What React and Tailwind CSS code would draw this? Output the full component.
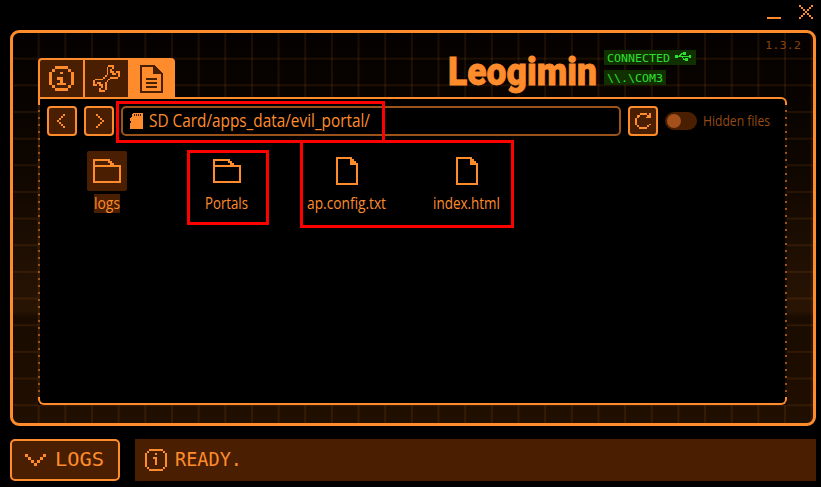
const O = "#ff8c2c";

/* Draws a bitmap glyph; every # in the rows is one cell. */
function Pixels({ rows, className }) {
  const w = Math.max(...rows.map((r) => r.length));
  const h = rows.length;
  return (
    <svg viewBox={`0 0 ${w} ${h}`} preserveAspectRatio="none" shapeRendering="crispEdges" fill="currentColor" className={`block shrink-0 ${className}`}>
      {rows.flatMap((r, y) => [...r].map((c, x) => (c === "#" ? <rect key={`${x}-${y}`} x={x} y={y} width={1} height={1} /> : null)))}
    </svg>
  );
}

const INFO = ["..#####..", ".#.....#.", "#...#...#", "#.......#", "#..##...#", "#...#...#", "#..###..#", ".#.....#.", "..#####.."];
const INFO_THIN = ["..#######..", ".#.......#.", "#....#....#", "#.........#", "#...##....#", "#....#....#", "#....#....#", "#....#....#", "#.........#", ".#.......#.", "..#######.."];
const WRENCH = [
  "........###...",
  ".......#..#...",
  ".......#.#....",
  ".......#.##.##",
  ".......#..##.#",
  "......#......#",
  ".....#...####.",
  ".####...#.....",
  "#......#......",
  "#.##..#.......",
  "##.##.#.......",
  "....#.#.......",
  "...#..#.......",
  "...###........",
];
const LEFT = ["...#", "..#.", ".#..", "#...", ".#..", "..#.", "...#"];
const CHEVRON = ["#.....#", ".#...#.", "..#.#..", "...#..."];
const CROSS = ["#.....#", ".#...#.", "..#.#..", "...#...", "..#.#..", ".#...#.", "#.....#"];
const REFRESH = [
  "...####.#",
  ".##....##",
  ".#....###",
  "#........",
  "#........",
  "#........",
  "#.......#",
  ".#.....#.",
  "..#####..",
];

/* Text in a condensed shape, fitted to its drawn width. */
function Label({ children, className = "", w, size, font = "Open Sans", weight = 400, stroke = 0 }) {
  return (
    <svg width={w} height={size * 1.4} className={`block shrink-0 overflow-visible ${className}`} fill="currentColor">
      <text x="0" y={size * 1.05} textLength={w} lengthAdjust="spacingAndGlyphs" fontSize={size} fontFamily={`'${font}', sans-serif`} fontWeight={weight} stroke="currentColor" strokeWidth={stroke}>{children}</text>
    </svg>
  );
}

function Folder() {
  return (
    <svg width="28" height="24" viewBox="0 0 28 24" fill="none" stroke="currentColor" strokeWidth="2" shapeRendering="crispEdges">
      <path d="M1 1H16V3H18V5H20V7H27V23H1Z M1 7H20" />
    </svg>
  );
}

function Page() {
  return (
    <svg width="22" height="28" viewBox="0 0 22 28" fill="none" stroke="currentColor" strokeWidth="2" shapeRendering="crispEdges">
      <path d="M1 1H15V3H17V5H19V7H21V27H1Z" />
      <path d="M14 2H16V4H18V6H20V8H14Z" fill="currentColor" stroke="none" />
    </svg>
  );
}

function FileItem({ name, w, folder, selected }) {
  return (
    <div className="flex w-[120px] flex-col items-center">
      <div className={`flex h-10 w-10 items-center justify-center rounded-[2px] ${selected ? "bg-[#4a1e00]" : ""}`}>
        {folder ? <Folder /> : <Page />}
      </div>
      <div className={`mt-[3px] flex h-[19px] items-center ${selected ? "bg-[#4a1e00]" : "pr-[2px]"}`}>
        <Label w={w} size={15.5}>{name}</Label>
      </div>
    </div>
  );
}

const btn = "flex h-[30px] w-[30px] shrink-0 items-center justify-center rounded-[4px] border-2 border-[#ff8c2c] bg-[#4a1e00]";

export default function App() {
  return (
    <div className="relative flex h-[487px] w-[821px] flex-col overflow-hidden bg-black text-[#ff8c2c]">
      <div className="flex h-[30px] shrink-0 justify-end pr-2">
        <div className="mt-[17px] h-[2px] w-[14px] bg-[#ff8c2c]" />
        <Pixels rows={CROSS} className="ml-[18px] mt-[5px] h-[14px] w-[14px]" />
      </div>

      <div className="ml-[10px] h-[396px] w-[806px] shrink-0 rounded-[9px] border-[3px] border-[#ff8c2c] bg-[linear-gradient(to_right,transparent_25px,#ff8c2c18_25px),linear-gradient(to_bottom,transparent_25px,#ff8c2c18_25px),linear-gradient(to_bottom,transparent_130px,#ff8c2c12_278px,transparent_284px),linear-gradient(to_bottom,#040100,#210f00)] bg-[size:26.67px_26.67px,26.67px_26.67px,100%_100%,100%_100%]">
        <div className="flex h-[64px] pl-[25px]">
          <div className="mt-[25px] flex h-[39px] w-[137px] shrink-0 overflow-hidden rounded-t-[4px] border-2 border-b-0 border-[#ff8c2c] bg-[#ff8c2c]">
            <div className="flex w-[43px] items-center justify-center bg-[#4a1e00]"><Pixels rows={INFO} className="h-[25px] w-[25px]" /></div>
            <div className="ml-[2px] flex w-[43px] items-center justify-center bg-[#4a1e00]"><Pixels rows={WRENCH} className="h-[27px] w-[27px]" /></div>
            <div className="flex flex-1 items-center justify-center pl-[2px] text-[#4a1e00]">
              <svg width="23" height="28" viewBox="0 0 23 28" fill="none" stroke="currentColor" strokeWidth="2" shapeRendering="crispEdges">
                <path d="M1 1H14L22 9V27H1Z M6 14H17 M6 18H17 M6 22H17" />
                <path d="M13 1H15V3H17V5H19V7H21V9H13Z" fill="currentColor" stroke="none" />
              </svg>
            </div>
          </div>
          <div className="ml-[273px] mt-[12px]"><Label w={149} size={38} font="Roboto" weight={900} stroke={0.8}>Leogimin</Label></div>
          <div className="ml-[7px] mt-[17px] flex w-[120px] flex-col items-start gap-[5px] text-[#2ee02e]">
            <div className="flex h-[15px] w-[92px] items-center bg-[#103000] pl-[3px]">
              <Label w={63} size={11} font="DejaVu Sans Mono">CONNECTED</Label>
              <svg width="17" height="9" viewBox="0 0 17 9" className="-mt-[3px] ml-[5px]" fill="none" stroke="currentColor" shapeRendering="crispEdges">
                <path d="M1 4.5H16 M4 4.5L7 1.5H10 M7 4.5L9 7.5H11" />
                <path d="M0 3h3v3H0z M8 0h3v3h-3z M10 6h3v3h-3z M14 3h2v3h-2z" fill="currentColor" stroke="none" />
              </svg>
            </div>
            <div className="flex h-[15px] w-[62px] items-center bg-[#103000] pl-[3px]"><Label w={56} size={11} font="DejaVu Sans Mono">{"\\\\.\\COM3"}</Label></div>
          </div>
          <div className="ml-[41px] mt-[4px] text-[#84420f]"><Label w={36} size={11} font="DejaVu Sans Mono">1.3.2</Label></div>
        </div>

        <div className="relative ml-[25px] h-[308px] w-[749px] bg-black">
          <div className="absolute left-0 top-0 h-[8px] w-full rounded-tr-[6px] border-2 border-b-0 border-[#ff8c2c]" />
          <div className="absolute bottom-0 left-0 h-[8px] w-full rounded-b-[6px] border-2 border-t-0 border-[#ff8c2c]" />
          <div className="absolute bottom-[8px] left-0 top-[8px] w-[2px] bg-[repeating-linear-gradient(to_bottom,#341904_0px,#341904_5px,#9b521b_5px,#9b521b_7px)]" />
          <div className="absolute bottom-[8px] right-0 top-[8px] w-[2px] bg-[repeating-linear-gradient(to_bottom,#180b02_0px,#180b02_5px,#9b521b_5px,#9b521b_7px)]" />
          <div className="flex items-center pl-[9px] pt-[9px]">
            <div className={btn}><Pixels rows={LEFT} className="mr-[2px] h-[14px] w-[8px]" /></div>
            <div className={`${btn} ml-[7px]`}><Pixels rows={LEFT} className="ml-[2px] h-[14px] w-[8px] -scale-x-100" /></div>
            <div className="ml-[7px] flex h-[30px] w-[500px] items-center rounded-[5px] border-2 border-[#99531b] pl-[7px]">
              <svg width="13" height="16" viewBox="0 0 13 16" shapeRendering="crispEdges" className="shrink-0">
                <path d="M3 0H13V16H0V10H1V8H0V5H1V4H2V1H3Z" fill={O} />
                <path d="M4 1h1v2H4zM6 1h1v2H6zM8 1h1v2H8zM10 1h1v2h-1z" fill="#4a1e00" />
              </svg>
              <Label w={221} size={18} className="ml-[6px]">SD Card/apps_data/evil_portal/</Label>
            </div>
            <div className={`${btn} ml-[7px]`}><Pixels rows={REFRESH} className="h-[16px] w-[16px]" /></div>
            <div className="ml-[7px] flex h-[18px] w-8 items-center rounded-full bg-[#4a1e00] pl-[2px]"><div className="h-[14px] w-[14px] rounded-full bg-[#a4501a]" /></div>
            <Label w={67} size={14} className="ml-[6px] text-[#944b13]">Hidden files</Label>
          </div>
          <div className="ml-[9px] mt-[15px] flex">
            <FileItem name="logs" w={26} folder selected />
            <FileItem name="Portals" w={43} folder />
            <FileItem name="ap.config.txt" w={79} />
            <FileItem name="index.html" w={67} />
          </div>
        </div>
      </div>

      <div className="ml-[10px] mt-[13px] flex h-[42px] shrink-0">
        <div className="flex w-[110px] items-center rounded-[5px] border-2 border-[#ff8c2c] bg-[#4a1e00] pl-[13px]">
          <Pixels rows={CHEVRON} className="h-[12px] w-[21px]" />
          <Label w={49} size={19.5} font="DejaVu Sans Mono" className="ml-[9px]">LOGS</Label>
        </div>
        <div className="ml-[15px] flex w-[681px] items-center bg-[#4a1e00] pl-[10px]">
          <Pixels rows={INFO_THIN} className="h-[22px] w-[22px]" />
          <Label w={67} size={19.5} font="DejaVu Sans Mono" className="ml-[8px]">READY.</Label>
        </div>
      </div>

      {/* Callout frames over the file browser */}
      <div className="absolute left-[116px] top-[101px] h-[42px] w-[269px] border-[3px] border-[#f00]" />
      <div className="absolute left-[187px] top-[150px] h-[75px] w-[82px] border-[3px] border-[#f00]" />
      <div className="absolute left-[300px] top-[140px] h-[88px] w-[214px] border-[3px] border-[#f00]" />
    </div>
  );
}
